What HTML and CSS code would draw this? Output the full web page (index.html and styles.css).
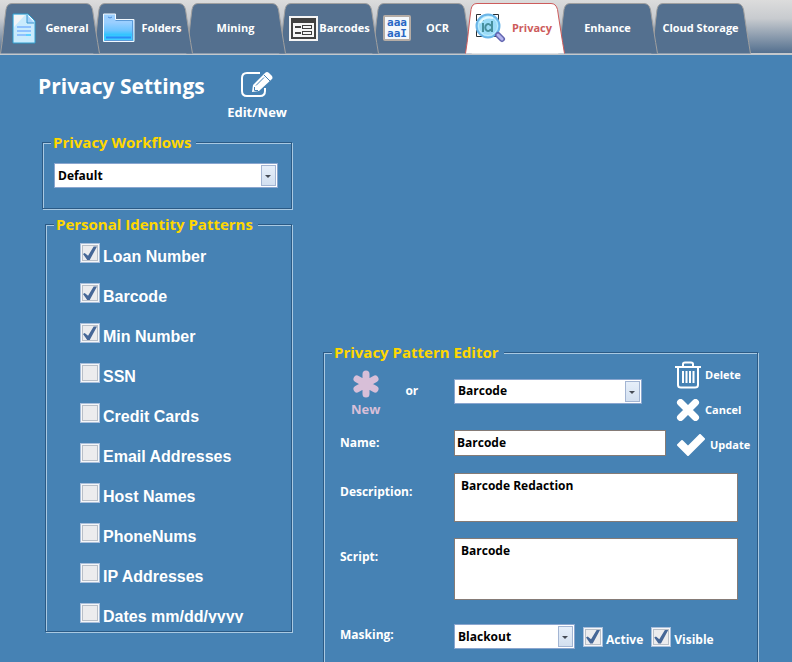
FILE: index.html
```html
<!DOCTYPE html>
<html lang="en">
<head>
<meta charset="utf-8">
<meta name="viewport" content="width=device-width, initial-scale=1">
<title>Privacy Settings</title>
<link rel="stylesheet" href="styles.css">
</head>
<body>
<svg class="defs" aria-hidden="true">
  <symbol id="tab-shape" viewBox="0 0 100 51">
    <path d="M0.5 50.5C3 36 4 20 6 6.500Q7 .5 12 .5H86Q91 .5 92.500 6.500C94.500 20 97 36 99.500 50.500"/>
  </symbol>
</svg>
<nav class="tabs">
  <a class="tab" href="#general">
    <svg class="tab-bg"><use href="#tab-shape"/></svg>
    <svg class="tab-icon" width="24" height="31" viewBox="0 0 24 31">
      <path d="M1 1H16L23 8V30H1Z" fill="#c9ebfd" stroke="#2f9fd0"/>
      <path d="M2 2H13L2 14Z" fill="#f3f5f6"/>
      <path d="M15 2V10H22" fill="#a5d3fb" stroke="#3a97cf"/>
      <path d="M17 3L21 7" stroke="#fff"/>
      <path d="M5 14H19M5 18H19M5 22H14" stroke="#8fc2ff" stroke-width="2"/><path d="M14 22H19" stroke="#5fd0ff" stroke-width="2"/>
    </svg>
    <span>General</span>
  </a>
  <a class="tab" href="#folders">
    <svg class="tab-bg"><use href="#tab-shape"/></svg>
    <svg class="tab-icon" width="32" height="30" viewBox="0 0 32 30">
      <defs><linearGradient id="folder" x2="0" y2="1"><stop offset=".3" stop-color="#9bcfff"/><stop offset=".6" stop-color="#6cc4ff"/><stop offset=".75" stop-color="#33c4ff"/><stop offset="1" stop-color="#45d0ff"/></linearGradient></defs>
      <path d="M.5 1H12.500V6.500H31V28.500H.5Z" fill="url(#folder)" stroke="#f2f9ff"/>
      <path d="M5 4Q7 6 9 4" fill="none" stroke="#4b8ede"/>
      <path d="M3 24.500H28" stroke="#2b8cf7" stroke-width="2"/>
      <path d="M12.500 7.500H29.500V27.500H2" fill="none" stroke="#5a9ad8"/>
    </svg>
    <span>Folders</span>
  </a>
  <a class="tab" href="#mining">
    <svg class="tab-bg"><use href="#tab-shape"/></svg>
    <span>Mining</span>
  </a>
  <a class="tab tab-barcodes" href="#barcodes">
    <svg class="tab-bg"><use href="#tab-shape"/></svg>
    <svg class="tab-icon" width="29" height="25" viewBox="0 0 29 25" shape-rendering="crispEdges">
      <path fill="#f5f5f5" d="M0 0H29V25H0Z"/><path fill="#404040" d="M2 2H27V23H2Z"/><path fill="#f5f5f5" d="M4 7H25V21H4Z"/>
      <path fill="#404040" d="M6 10H12V12H6ZM6 16H12V18H6ZM13 9H23V13H13ZM13 15H23V19H13Z"/><path fill="#f5f5f5" d="M14 10H22V12H14ZM14 16H22V18H14Z"/>
    </svg>
    <span>Barcodes</span>
  </a>
  <a class="tab tab-ocr" href="#ocr">
    <svg class="tab-bg"><use href="#tab-shape"/></svg>
    <span class="ocr-icon" aria-hidden="true">aaa<br>aaI</span>
    <span>OCR</span>
  </a>
  <a class="tab tab-active" href="#privacy" aria-current="page">
    <svg class="tab-bg"><use href="#tab-shape"/></svg>
    <svg class="tab-icon" width="31" height="31" viewBox="0 0 31 31">
      <path d="M1.500 8V1.500H6M18 1.500H23.500V8M1.500 17V23.500H9M18 23.500H23.500" fill="none" stroke="#2b3033"/>
      <circle cx="13" cy="13" r="11.500" fill="#9bdcf8" stroke="#6ab5e8" stroke-width="2"/>
      <circle cx="13" cy="13" r="9.500" fill="none" stroke="#c2efff"/>
      <path d="M8 10V19M8 6V8M16 13A3 3.500 0 1 0 16 16M17 8V19" fill="none" stroke="#478f9d" stroke-width="2"/>
      <path d="M5 10Q9 3 18 5" stroke="#e5faff" stroke-width="2" fill="none"/>
      <path d="M23 22L27 26" stroke="#6265b0" stroke-width="6" stroke-linecap="round"/><path d="M23 22L27 26" stroke="#b4b5ef" stroke-width="3" stroke-linecap="round"/>
    </svg>
    <span>Privacy</span>
  </a>
  <a class="tab" href="#enhance">
    <svg class="tab-bg"><use href="#tab-shape"/></svg>
    <span>Enhance</span>
  </a>
  <a class="tab" href="#cloud">
    <svg class="tab-bg"><use href="#tab-shape"/></svg>
    <span>Cloud Storage</span>
  </a>
</nav>
<main>
  <section class="settings">
    <div class="heading">
      <h1>Privacy Settings</h1>
      <button class="edit" type="button">
        <svg width="34" height="27" viewBox="0 0 34 27" fill="none" stroke="#fff" stroke-width="2">
          <path d="M20 2H7Q2 2 2 7V20Q2 25 7 25H20Q25 25 25 20V17"/>
          <path fill="#fff" stroke="none" d="M12 21L13 14L25 2Q27 0 29 2L32 5Q33 7 32 8L19 20Z"/>
          <path stroke="#4682b4" stroke-width="1" d="M24 4L30 10M16 14.500L24 6.500M14.500 16V19.500H18"/>
        </svg>
        <span>Edit/New</span>
      </button>
    </div>
    <fieldset class="group workflows">
      <legend>Privacy Workflows</legend>
      <div class="combo"><select aria-label="Privacy workflow"><option>Default</option></select></div>
    </fieldset>
    <fieldset class="group patterns">
      <legend>Personal Identity Patterns</legend>
      <div class="pattern-list">
        <label class="check"><input type="checkbox" checked><span>Loan Number</span></label>
        <label class="check"><input type="checkbox" checked><span>Barcode</span></label>
        <label class="check"><input type="checkbox" checked><span>Min Number</span></label>
        <label class="check"><input type="checkbox"><span>SSN</span></label>
        <label class="check"><input type="checkbox"><span>Credit Cards</span></label>
        <label class="check"><input type="checkbox"><span>Email Addresses</span></label>
        <label class="check"><input type="checkbox"><span>Host Names</span></label>
        <label class="check"><input type="checkbox"><span>PhoneNums</span></label>
        <label class="check"><input type="checkbox"><span>IP Addresses</span></label>
        <label class="check"><input type="checkbox"><span>Dates mm/dd/yyyy</span></label>
      </div>
    </fieldset>
  </section>
  <fieldset class="group editor">
    <legend>Privacy Pattern Editor</legend>
    <div class="editor-top">
      <div class="fields">
        <div class="pick">
          <button class="new" type="button">
            <svg width="28" height="28" viewBox="0 0 28 28" stroke="#d8bfd8" stroke-width="7" stroke-linecap="round"><path d="M14 4V24M5 9L23 19M23 9L5 19"/></svg>
            <span>New</span>
          </button>
          <span>or</span>
        </div>
        <div class="combo"><select aria-label="Pattern"><option>Barcode</option></select></div>
        <label for="name">Name:</label>
        <input class="box" id="name" type="text" value="Barcode">
      </div>
      <div class="actions">
        <button type="button">
          <svg width="26" height="28" viewBox="0 0 26 28" fill="none" stroke="#fff" stroke-width="2"><path d="M0 6H26M8 5V3Q8 1.500 10 1.500H16Q18 1.500 18 3V5M3 6V24Q3 26.500 6 26.500H20Q23 26.500 23 24V6M8 10V22M11.500 10V22M15 10V22M18.500 10V22"/></svg>
          <span>Delete</span>
        </button>
        <button type="button">
          <svg width="26" height="22" viewBox="0 0 26 22" stroke="#fff" stroke-width="7" stroke-linecap="round"><path d="M5.500 3.500L20.500 18.500M20.500 3.500L5.500 18.500"/></svg>
          <span>Cancel</span>
        </button>
        <button type="button">
          <svg width="31" height="22" viewBox="-1 0 31 22" fill="#fff" stroke="#fff" stroke-width="2" stroke-linejoin="round"><path d="M2 11L6 7L12 13L24 1L28 5L12 21Z"/></svg>
          <span>Update</span>
        </button>
      </div>
    </div>
    <div class="editor-fields">
      <label for="description">Description:</label>
      <textarea class="box" id="description" rows="2">Barcode Redaction</textarea>
      <label for="script">Script:</label>
      <textarea class="box script" id="script" rows="3">Barcode</textarea>
      <label for="masking">Masking:</label>
      <div class="masking">
        <div class="combo"><select id="masking"><option>Blackout</option></select></div>
        <label class="check"><input type="checkbox" checked><span>Active</span></label>
        <label class="check"><input type="checkbox" checked><span>Visible</span></label>
      </div>
    </div>
  </fieldset>
</main>
</body>
</html>
```
FILE: styles.css
```css
*, *::before, *::after { box-sizing: border-box; }

body {
  margin: 0;
  min-height: 100vh;
  display: flex;
  flex-direction: column;
  background: #4682b4;
  color: #fff;
  font: bold 12px/18px "Open Sans", "Noto Sans", sans-serif;
}

button, input, select, textarea { font: inherit; color: inherit; }
button { background: none; border: 0; padding: 0; }
svg { flex: none; }
.defs { position: absolute; width: 0; height: 0; }

/* Tab strip */
.tabs {
  display: flex;
  height: 55px;
  padding-top: 3px;
  background: linear-gradient(#dcdcdc, #c8cbcf 35%, #54708f);
  border-bottom: 2px solid #c4c8cc;
}
.tab {
  position: relative;
  isolation: isolate;
  flex: none;
  display: flex;
  align-items: center;
  justify-content: center;
  gap: 9px;
  width: 93px;
  padding-left: 6px;
  color: #fff;
  font-size: 11px;
  text-decoration: none;
  white-space: nowrap;
}
.tab:nth-child(1) { z-index: 8; padding-left: 8px; }
.tab:nth-child(2) { z-index: 7; gap: 6px; }
.tab:nth-child(3) { z-index: 6; }
.tab:nth-child(4) { z-index: 5; }
.tab:nth-child(5) { z-index: 4; }
.tab:nth-child(7) { z-index: 2; }
.tab:nth-child(8) { z-index: 1; }
.tab-bg {
  position: absolute;
  z-index: -1;
  inset: 0 auto auto 0;
  width: 100px;
  height: 51px;
  fill: #54708f;
  stroke: #a0a0a0;
}
.tab.tab-barcodes { gap: 1px; padding-left: 8px; }
.tab.tab-ocr { gap: 15px; justify-content: flex-start; padding-left: 11px; }
.tab.tab-active { z-index: 9; gap: 6px; padding-left: 4px; color: #cd5c5c; }
.tab-active .tab-bg { fill: #fff; stroke: #cd5c5c; }
.ocr-icon {
  width: 28px;
  height: 26px;
  border: 2px solid #b5aca5;
  border-radius: 2px;
  background: #f4f8fc;
  color: #2766c4;
  font: bold 11px/11px "DejaVu Sans Mono", monospace;
  text-align: center;
}

/* Page columns */
main { flex: 1; display: flex; gap: 31px; padding: 0 34px 0 42px; }
.settings { flex: 0 1 250px; }
.heading { display: flex; justify-content: space-between; height: 77px; margin-left: -4px; padding: 16px 5px 0 0; }
h1 { margin: 0; font-size: 21px; line-height: 30px; white-space: nowrap; }
.edit { display: flex; flex-direction: column; align-items: center; gap: 5px; align-self: flex-start; font-size: 13px; }

/* Etched group box */
.group {
  min-width: 0;
  margin: 0;
  padding: 0;
  border: 1px solid #2b5a85;
  box-shadow: 1px 1px 0 #a9c9e2, inset 1px 1px 0 #a9c9e2;
}
legend {
  margin-left: 8px;
  padding: 0 5px 0 2px;
  background: #4682b4;
  color: #ffd700;
  font-size: 15px;
  line-height: 20px;
}
.workflows { height: 77px; }
.workflows .combo { margin: 11px 13px 0 11px; }
.patterns { margin: 5px 0 0 3px; padding-bottom: 8px; }
.pattern-list { height: 389px; overflow: hidden; padding: 9px 0 0 34px; font: bold 16px/20px "Liberation Sans", sans-serif; }
.pattern-list .check { margin-bottom: 20px; }

.check { display: flex; align-items: flex-start; height: 20px; gap: 3px; }
.check span { padding-top: 4px; }
.check input {
  appearance: none;
  flex: none;
  display: grid;
  width: 20px;
  height: 20px;
  margin: 0;
  border: 1px solid #a9bfdc;
  background: #f6f7f8;
  padding: 1px;
}
.check input::before {
  content: "";
  border: 1px solid #b9bfc8;
  background: #ececee;
  grid-area: 1 / 1;
}
.check input:checked::after {
  content: "";
  grid-area: 1 / 1;
  margin: 1px;
  background: #466797;
  clip-path: polygon(0 57%, 12% 50%, 36% 70%, 76% 3%, 100% 3%, 48% 100%, 30% 100%);
}

.combo { position: relative; height: 25px; color: #000; }
.combo select {
  appearance: none;
  width: 100%;
  height: 100%;
  padding: 0 20px 0 3px;
  border: 1px solid #8aa6cf;
  border-radius: 0;
  background: #fff;
}
.combo::before {
  content: "";
  position: absolute;
  inset: 2px 2px 2px auto;
  width: 15px;
  border: 1px solid #a3b5d3;
  background: linear-gradient(#e6effa, #d3e0f0);
  pointer-events: none;
}
.combo::after {
  content: "";
  position: absolute;
  top: 12px;
  right: 7px;
  border: solid transparent;
  border-width: 3px 3px 0;
  border-top-color: #454b55;
  pointer-events: none;
}
.box {
  display: block;
  width: 100%;
  height: 26px;
  margin: 0;
  padding: 0 2px 2px;
  border: 1px solid #857b76;
  border-radius: 0;
  background: #fff;
  color: #000;
}
textarea.box { height: 49px; padding: 3px 6px; resize: none; }
textarea.script { height: 62px; }

/* Pattern editor, open at the lower window edge */
.editor { flex: 1; margin-top: 287px; border-bottom: 0; }
.editor-top { display: flex; justify-content: space-between; margin: 0 7px 0 16px; }
.fields {
  flex: 0 1 326px;
  display: grid;
  grid-template-columns: 114px 1fr;
  grid-template-rows: 68px 26px;
  align-items: center;
}
.fields .combo { width: 188px; margin-bottom: 10px; }
.pick { display: flex; align-items: center; gap: 25px; margin: -5px 0 0 11px; }
.pick > span { margin-top: -6px; }
.new { display: flex; flex-direction: column; align-items: center; gap: 2px; color: #d8bfd8; font-size: 13px; }
.actions { flex: none; width: 75px; display: flex; flex-direction: column; margin-top: -5px; }
.actions button { display: flex; align-items: center; gap: 4px; height: 35px; font-size: 11px; white-space: nowrap; }
.editor-fields {
  display: grid;
  grid-template-columns: 114px 1fr;
  row-gap: 16px;
  margin: 11px 19px 0 16px;
}
.editor-fields > label { padding-top: 10px; }
.masking { display: flex; align-items: center; gap: 8px; margin-top: 8px; }
.masking .combo { width: 121px; }
```
